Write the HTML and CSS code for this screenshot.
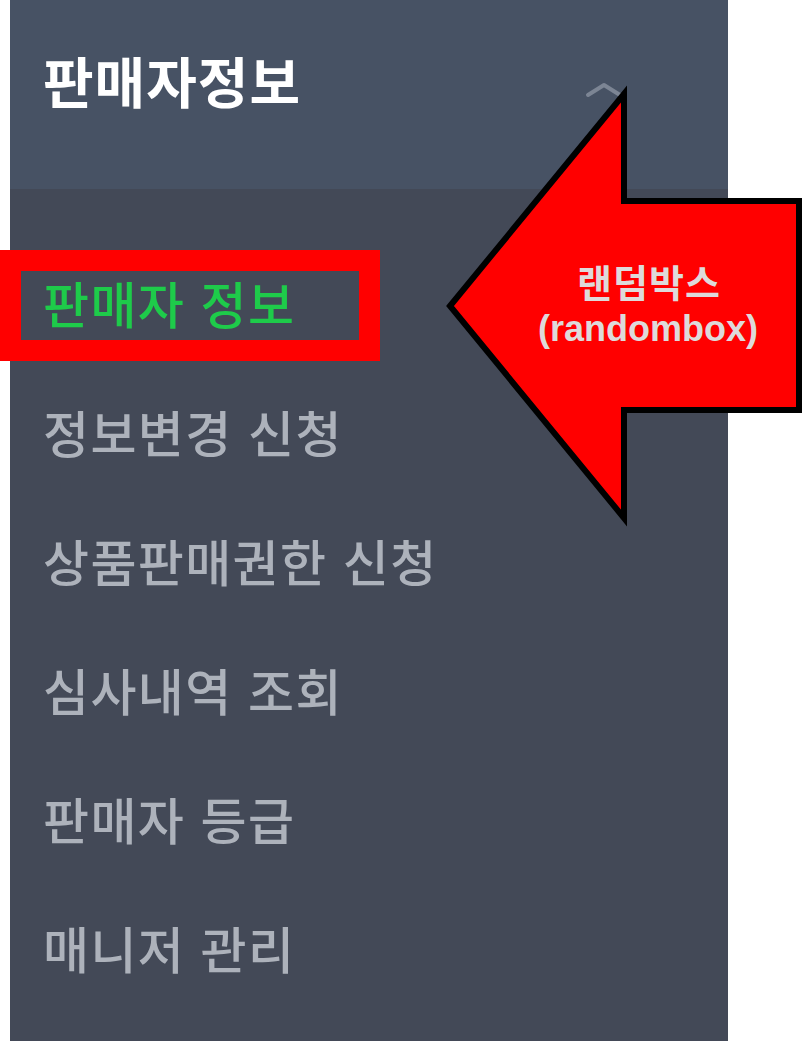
FILE: index.html
```html
<!DOCTYPE html>
<html lang="ko">
<head>
<meta charset="utf-8">
<title>판매자정보</title>
<link rel="stylesheet" href="styles.css">
</head>
<body>
<div class="page">
  <nav class="sidebar">
    <div class="side-head">
      <h2 class="side-title">판매자정보</h2>
      <svg class="chevron" width="40" height="20" viewBox="0 0 40 20">
        <path d="M4 15 L20 5 L36 15" fill="none" stroke="#7c8594" stroke-width="4" stroke-linecap="round" stroke-linejoin="round"/>
      </svg>
    </div>
    <ul class="side-menu">
      <li class="side-item active">판매자 정보</li>
      <li class="side-item">정보변경 신청</li>
      <li class="side-item">상품판매권한 신청</li>
      <li class="side-item">심사내역 조회</li>
      <li class="side-item">판매자 등급</li>
      <li class="side-item">매니저 관리</li>
    </ul>
  </nav>

  <div class="mark-box"></div>

  <svg class="callout" width="802" height="1041" viewBox="0 0 802 1041">
    <polygon points="450,306 624,94 624,201 799,201 799,410 624,410 624,518"
             fill="#ff0000" stroke="#000" stroke-width="6" stroke-linejoin="miter"/>
    <text class="callout-text callout-ko" x="649" y="297" text-anchor="middle">랜덤박스</text>
    <text class="callout-text" x="648" y="341" text-anchor="middle">(randombox)</text>
  </svg>
</div>
</body>
</html>
```

FILE: styles.css
```css
html, body {
  margin: 0;
  padding: 0;
  background: #ffffff;
}

.page {
  position: relative;
  width: 802px;
  height: 1041px;
  padding-left: 10px;
  box-sizing: border-box;
  overflow: hidden;
  font-family: "Noto Sans CJK KR", "Noto Sans", sans-serif;
}

.sidebar {
  width: 718px;
  height: 1041px;
  background: #434957;
  display: flex;
  flex-direction: column;
}

.side-head {
  height: 189px;
  background: #475264;
  display: flex;
  align-items: center;
  justify-content: space-between;
  padding: 0 104px 0 33px;
  box-sizing: border-box;
}

.side-title {
  margin: 0;
  color: #ffffff;
  font-size: 55px;
  font-weight: 700;
  letter-spacing: 1px;
  line-height: 1;
  transform: translateY(-15px);
}

.chevron {
  display: block;
  transform: translateY(-5px);
}

.side-menu {
  list-style: none;
  margin: 0;
  padding: 49px 0 0 33px;
}

.side-item {
  height: 129px;
  line-height: 129px;
  font-size: 50px;
  letter-spacing: 1.4px;
  color: #adb2bb;
  font-weight: 500;
  white-space: nowrap;
}

.side-item.active {
  color: #1ecb4a;
}

/* highlight frame around the active entry */
.mark-box {
  position: absolute;
  left: 0;
  top: 250px;
  width: 380px;
  height: 111px;
  border: 21px solid #ff0000;
  box-sizing: border-box;
}

.callout {
  position: absolute;
  left: 0;
  top: 0;
}

.callout-text {
  font-family: "Liberation Sans", "Noto Sans CJK KR", sans-serif;
  font-weight: 700;
  font-size: 36px;
  fill: #dedada;
}

.callout-ko {
  font-size: 38px;
  letter-spacing: 1px;
}
```
